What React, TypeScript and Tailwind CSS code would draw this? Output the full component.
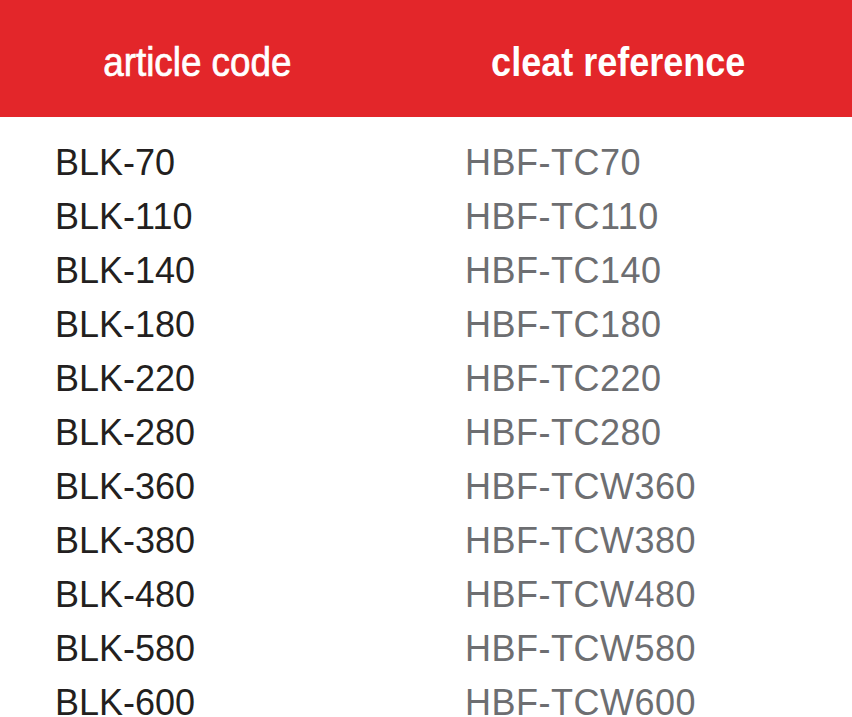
import React from "react";

const rows: [string, string][] = [
  ["BLK-70", "HBF-TC70"],
  ["BLK-110", "HBF-TC110"],
  ["BLK-140", "HBF-TC140"],
  ["BLK-180", "HBF-TC180"],
  ["BLK-220", "HBF-TC220"],
  ["BLK-280", "HBF-TC280"],
  ["BLK-360", "HBF-TCW360"],
  ["BLK-380", "HBF-TCW380"],
  ["BLK-480", "HBF-TCW480"],
  ["BLK-580", "HBF-TCW580"],
  ["BLK-600", "HBF-TCW600"],
];

export default function App() {
  return (
    <div
      className="w-[852px] h-[717px] overflow-hidden bg-white"
      style={{ fontFamily: '"Liberation Sans", Arial, sans-serif' }}
    >
      <div className="h-[117px] bg-[#e3262a] flex items-start pt-[42px] text-white text-[40px] leading-[40px]">
        <div className="w-[395px] flex justify-center">
          <span className="inline-block scale-x-[0.92] [-webkit-text-stroke:0.7px_white] whitespace-nowrap">
            article code
          </span>
        </div>
        <div className="w-[447px] flex justify-center">
          <span className="inline-block scale-x-[0.9] font-bold whitespace-nowrap">
            cleat reference
          </span>
        </div>
      </div>
      <div className="pt-[19px] text-[36px] leading-[54px]">
        {rows.map(([a, b]) => (
          <div key={a} className="grid grid-cols-[465px_1fr]">
            <div className="pl-[55px] text-[#231f20]">{a}</div>
            <div className="text-[#6d6e71] tracking-[0.5px]">{b}</div>
          </div>
        ))}
      </div>
    </div>
  );
}
